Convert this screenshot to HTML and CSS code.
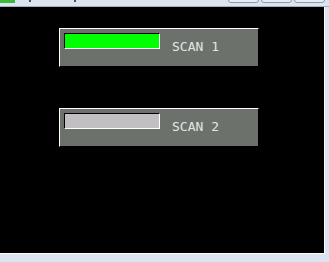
FILE: index.html
```html
<!DOCTYPE html>
<html>
<head>
<meta charset="utf-8">
<link rel="stylesheet" href="styles.css">
</head>
<body>
<div class="window">
  <div class="titlebar">
    <span class="app-icon"></span>
    <span class="tick t1"></span>
    <span class="tick t2"></span>
    <div class="controls">
      <span class="ctl"></span>
      <span class="ctl"></span>
      <span class="ctl"></span>
    </div>
  </div>
  <div class="body-row">
    <div class="canvas">
      <div class="panel">
        <div class="bar"><div class="fill on"></div></div>
        <span class="label">SCAN 1</span>
      </div>
      <div class="panel">
        <div class="bar"><div class="fill off"></div></div>
        <span class="label">SCAN 2</span>
      </div>
    </div>
    <div class="side"></div>
  </div>
  <div class="bottom"></div>
</div>
</body>
</html>
```
FILE: styles.css
```css
html, body {
  margin: 0;
  padding: 0;
  background: #dbe5f1;
  width: 329px;
  height: 262px;
  overflow: hidden;
}
.window {
  display: flex;
  flex-direction: column;
  width: 329px;
  height: 262px;
}
.titlebar {
  position: relative;
  height: 6px;
  background: #dbe5f1;
  border-bottom: 1px solid #a6aebb;
  flex: none;
}
.app-icon {
  position: absolute;
  left: 0;
  top: 0;
  width: 15px;
  height: 3px;
  background: #3cb83c;
}
.tick {
  position: absolute;
  top: 0;
  width: 2px;
  height: 2px;
  background: #4a5060;
}
.t1 { left: 29px; }
.t2 { left: 74px; }
.controls {
  position: absolute;
  top: -4px;
  left: 228px;
  display: flex;
  gap: 2px;
}
.ctl {
  width: 29px;
  height: 5px;
  border: 1px solid #8c9ab0;
  border-radius: 0 0 3px 3px;
  background: #e6edf6;
}
.body-row {
  display: flex;
  height: 247px;
  flex: none;
}
.canvas {
  width: 325px;
  height: 247px;
  background: #000;
  border-right: 1px solid #ffffff;
  border-bottom: 1px solid #ffffff;
  box-sizing: border-box;
  padding: 21px 0 0 59px;
  display: flex;
  flex-direction: column;
  gap: 41px;
}
.side {
  flex: 1;
  background: #dbe5f1;
}
.bottom {
  flex: 1;
  background: #dbe5f1;
}
.panel {
  width: 200px;
  height: 39px;
  box-sizing: border-box;
  background: #6c716c;
  border-top: 1px solid #ffffff;
  border-left: 1px solid #ffffff;
  border-right: 1px solid #000;
  border-bottom: 1px solid #000;
  display: flex;
  align-items: flex-start;
  padding: 4px 0 0 4px;
}
.bar {
  width: 96px;
  height: 16px;
  box-sizing: border-box;
  border-top: 1px solid #000;
  border-left: 1px solid #000;
  border-right: 1px solid #ffffff;
  border-bottom: 1px solid #ffffff;
  flex: none;
}
.fill {
  width: 100%;
  height: 100%;
}
.fill.on { background: #00ff00; }
.fill.off { background: #c3bec3; }
.label {
  margin: 7px 0 0 12px;
  font-family: "DejaVu Sans Mono", monospace;
  font-size: 13px;
  line-height: 13px;
  color: #e4e6e4;
  letter-spacing: 0;
}
```
